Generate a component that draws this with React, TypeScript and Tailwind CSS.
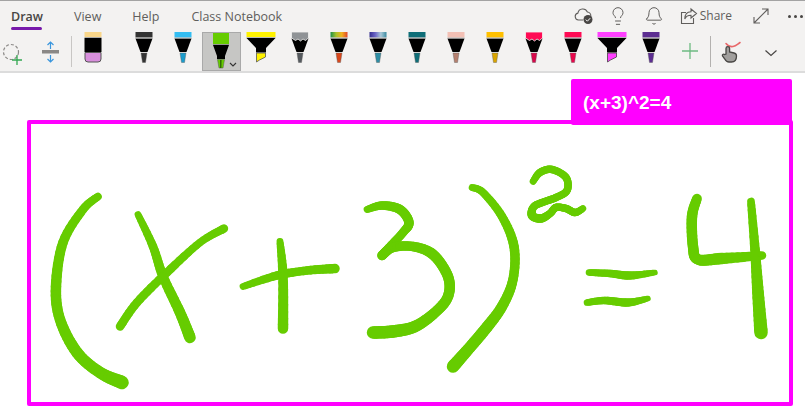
import { Bell, Lightbulb } from "lucide-react";

type Pt = [number, number, number];

const INK = "#66cc00";

const strokes: Pt[][] = [
    // (
    [[98, 197, 6], [83, 210, 7], [63, 243, 8], [56, 287, 9], [60, 320, 9], [77, 353, 10], [100, 373, 10], [122, 383, 12]],
    // x
    [[138, 215, 5], [153, 247, 7], [163, 277, 8], [180, 313, 9], [190, 338, 10]],
    [[224, 229, 7], [200, 243, 6], [167, 273, 7], [137, 303, 7], [120, 327, 7]],
    // +
    [[243, 287, 5], [277, 276, 7], [307, 271, 7], [335, 269, 8]],
    [[280, 242, 5], [283, 277, 8], [283, 329, 9]],
    // 3
    [[367, 210, 5], [382, 206, 7], [400, 210, 8], [409, 223, 8], [403, 233, 7], [392, 245, 7], [382, 256, 8]],
    [[382, 256, 8], [393, 248, 8], [413, 247, 8], [433, 255, 9], [448, 277, 9], [448, 297, 9], [435, 313, 9], [415, 327, 10], [393, 332, 11], [373, 333, 11]],
    // )
    [[472, 188, 5], [483, 193, 6], [502, 217, 7], [514, 247, 8], [513, 280, 8], [502, 307, 9], [485, 330, 10], [468, 350, 10], [453, 367, 11]],
    // 2
    [[533, 182, 5], [540, 173, 6], [552, 170, 6], [566, 178, 6], [567, 191, 6], [556, 198, 6], [545, 202, 6], [534, 207, 6], [532, 216, 7], [541, 219, 7], [550, 214, 6], [556, 208, 6], [566, 209, 6], [575, 213, 6], [583, 209, 5]],
    // =
    [[589, 273, 5], [610, 274, 6], [630, 276, 7], [655, 273, 4]],
    [[587, 303, 5], [605, 301, 6], [628, 303, 7], [648, 299, 4]],
    // 4
    [[697, 199, 8], [692, 217, 9], [693, 247, 9], [698, 260, 9], [722, 259, 10], [762, 256, 7]],
    [[751, 202, 6], [755, 250, 8], [758, 293, 10], [761, 333, 12]],
];

// catmull-rom sampling, the ink changes width along the stroke
function sample(points: Pt[]) {
    const out: Pt[] = [];
    for (let i = 0; i < points.length - 1; i++) {
        const p0 = points[Math.max(i - 1, 0)];
        const p1 = points[i];
        const p2 = points[i + 1];
        const p3 = points[Math.min(i + 2, points.length - 1)];
        for (let s = 0; s < 8; s++) {
            const t = s / 8;
            const f = (a: number, b: number, c: number, d: number) =>
                0.5 * (2 * b + (c - a) * t + (2 * a - 5 * b + 4 * c - d) * t * t + (3 * b - a - 3 * c + d) * t * t * t);
            out.push([f(p0[0], p1[0], p2[0], p3[0]), f(p0[1], p1[1], p2[1], p3[1]), p1[2] + (p2[2] - p1[2]) * t]);
        }
    }
    out.push(points[points.length - 1]);
    return out;
}

function Ink() {
    return (
        <svg viewBox="31 125 758 277" className="block w-full h-full">
            <g stroke={INK} strokeLinecap="round" fill="none">
                {strokes.map((points, i) =>
                    sample(points).map((p, j, all) =>
                        j === 0 ? null : (
                            <line key={`${i}-${j}`} x1={all[j - 1][0]} y1={all[j - 1][1]} x2={p[0]} y2={p[1]} strokeWidth={p[2] + 1.5} />
                        )
                    )
                )}
            </g>
        </svg>
    );
}

function Pen({ cap, tip, torn, id, stops }: { cap: string; tip: string; torn?: boolean; id?: string; stops?: string[] }) {
    const capFill = stops ? `url(#${id})` : cap;
    return (
        <svg width="30" height="31" viewBox="0 0 30 31">
            {stops && (
                <defs>
                    <linearGradient id={id}>
                        {stops.map((c, i) => (
                            <stop key={i} offset={i / (stops.length - 1)} stopColor={c} />
                        ))}
                    </linearGradient>
                </defs>
            )}
            <path d="M6.500 6.500h17l-5 13.500h-7z" fill="#000" />
            {torn ? (
                <path d="M6.500 0h17v6l-3 2.500-2.500-1.500-2.500 2-2.500-2-2.500 1.500-4-2.500z" fill={capFill} stroke="#f3f2f1" strokeWidth="0.8" />
            ) : (
                <>
                    <rect x="6.5" y="0" width="17" height="5.5" fill={capFill} />
                    <path d="M6.500 6h17" stroke="#a9a9a9" strokeWidth="0.8" />
                </>
            )}
            <path d="M12 21h6l-1.500 9.500h-3z" fill={tip} stroke="#555" strokeWidth="0.4" />
        </svg>
    );
}

function Highlighter({ cap, tip, tipDark }: { cap: string; tip: string; tipDark: string }) {
    return (
        <svg width="30" height="31" viewBox="0 0 30 31">
            <rect x="0.5" y="0" width="29" height="5" fill={cap} />
            <path d="M0.500 6h29l-9.500 10v4.500h-10V16z" fill="#000" />
            <path d="M0.500 5.500h29" stroke="#a9a9a9" strokeWidth="0.8" />
            <path d="M10.500 21h9v4l-6 3-3 2z" fill={tip} stroke={tipDark} strokeWidth="0.8" />
        </svg>
    );
}

function Eraser() {
    return (
        <svg width="30" height="31" viewBox="0 0 30 31">
            <rect x="6.5" y="0" width="17" height="5" fill="#f9d68a" />
            <path d="M6.500 5.500h17" stroke="#999" strokeWidth="0.8" />
            <rect x="6.5" y="6" width="17" height="14" fill="#000" />
            <path d="M7 20.500h16V27a3 3 0 0 1-3 3H10a3 3 0 0 1-3-3z" fill="#d88fdc" stroke="#555" strokeWidth="1" />
        </svg>
    );
}

function SelectedPen() {
    return (
        <div className="w-[39px] h-[39px] bg-[#c6c6c4] border border-[#a9a9a9] flex justify-center items-start">
            <svg width="37" height="37" viewBox="0 0 37 37">
                <rect x="10" y="0" width="16" height="11" fill="#66cc00" />
                <path d="M10 11.500h16" stroke="#8a8a8a" strokeWidth="0.8" />
                <path d="M10 12h16l-4 11v3h-8v-3z" fill="#000" />
                <path d="M14.500 26.500h7l-1.500 8.500h-4z" fill="#66cc00" stroke="#555" strokeWidth="0.5" />
                <path d="M17 27h1.600l-.2 8h-1.400z" fill="#2f6b00" />
                <path d="M27 30l3 3 3-3" fill="none" stroke="#333" strokeWidth="1.1" />
            </svg>
        </div>
    );
}

function Cell({ children }: { children: React.ReactNode }) {
    return <div className="w-[39px] h-[39px] shrink-0 flex justify-center items-start">{children}</div>;
}

function Lasso() {
    return (
        <svg width="22" height="24" viewBox="0 0 22 24">
            <circle cx="9" cy="10" r="7.5" fill="none" stroke="#8a8886" strokeWidth="1.2" strokeDasharray="3 2" />
            <path d="M15 13v10M10 18h10" stroke="#33a852" strokeWidth="1.3" />
        </svg>
    );
}

function InsertSpace() {
    return (
        <svg width="20" height="22" viewBox="0 0 20 22">
            <rect x="1" y="9" width="17" height="3.5" fill="#8a8886" />
            <path d="M9.500 8V1M6.500 4l3-3 3 3M9.500 14v7M6.500 18l3 3 3-3" fill="none" stroke="#3a96dd" strokeWidth="1.2" />
        </svg>
    );
}

function CloudCheck() {
    return (
        <svg width="20" height="18" viewBox="0 0 20 18" fill="none">
            <path d="M9 13H4.500a3.500 3.500 0 0 1-.6-6.900A5 5 0 0 1 13.400 5a3.600 3.600 0 0 1 3.400 4" stroke="#605e5c" strokeWidth="1.1" />
            <circle cx="14" cy="12.5" r="4.5" fill="#484644" />
            <path d="M11.800 12.600l1.600 1.600 2.800-3" stroke="#fff" strokeWidth="1" />
        </svg>
    );
}

function ShareIcon() {
    return (
        <svg width="18" height="18" viewBox="0 0 18 18" fill="none" stroke="#605e5c" strokeWidth="1.1">
            <path d="M6 5.500H1.500v11h12V11" />
            <path d="M11 2l5.500 4.500L11 11V8.200C8 8.200 5.800 9.500 4.800 12c0-4.500 2.500-7 6.200-7.200z" />
        </svg>
    );
}

function ExpandIcon() {
    return (
        <svg width="16" height="16" viewBox="0 0 16 16" fill="none" stroke="#605e5c" strokeWidth="1.1">
            <path d="M1 15L15 1M9 1h6v6M1 9v6h6" />
        </svg>
    );
}

function TouchIcon() {
    return (
        <svg width="22" height="22" viewBox="0 0 22 22" fill="none">
            <path d="M6 2.500c2 2.500 4.500 3.500 7 3 3-.6 4-2 7-4" stroke="#e8686a" strokeWidth="1.6" strokeLinecap="round" />
            <path d="M6 13V7.500a1.800 1.800 0 0 1 3.600 0V11l4.400 1c1.800.4 2.500 1.500 2.500 3 0 3.500-1.800 6-5 6H9c-2 0-3.200-1-4.200-3L2.500 15c-.6-1.200.8-2.500 2-1.500z" fill="#a19f9d" stroke="#484644" strokeWidth="1.3" />
        </svg>
    );
}

const pens = [
    <Pen key="black" cap="#333333" tip="#333333" />,
    <Pen key="blue" cap="#33bdf2" tip="#1b9ccc" />,
    <SelectedPen key="green" />,
    <Highlighter key="yellow" cap="#fff200" tip="#fff200" tipDark="#555" />,
    <Pen key="silver" cap="#8f9396" tip="#555a5e" torn />,
    <Pen key="rainbow" cap="" tip="#d9471b" id="rainbow" stops={["#1c8f4a", "#a6c22c", "#f2b01e", "#e0452a"]} />,
    <Pen key="galaxy" cap="" tip="#2e8ea5" id="galaxy" stops={["#35308f", "#6a63c7", "#a9c9d8", "#3a8aa0"]} />,
    <Pen key="teal" cap="#0f6e78" tip="#0f6e78" />,
    <Pen key="rose" cap="#f2c0b5" tip="#b5806f" />,
    <Pen key="gold" cap="#ffc000" tip="#d9a400" />,
    <Pen key="redtorn" cap="#ff0a54" tip="#d6084a" torn />,
    <Pen key="red" cap="#ff0a54" tip="#e8084c" />,
    <Highlighter key="magenta" cap="#ff40ff" tip="#ff40ff" tipDark="#444" />,
    <Pen key="purple" cap="#5c2d91" tip="#5c2d91" />,
];

export default function App() {
    return (
        <div className="w-[805px] h-[420px] bg-white flex flex-col overflow-hidden font-['Open_Sans',sans-serif]">
            <div className="h-[73px] shrink-0 bg-[#f3f2f1] border-t border-[#a3a3a3] border-b-2 border-b-[#dcdcdc] flex flex-col">
                <div className="h-[31px] shrink-0 flex items-start text-[12.5px] text-[#605e5c]">
                    <div className="ml-[11px] w-[31px] h-[29px] flex flex-col justify-between">
                        <span className="font-semibold text-[#484644] mt-[7px] leading-[18px]">Draw</span>
                        <div className="h-[3px] bg-[#7719aa] rounded-sm"></div>
                    </div>
                    <span className="ml-[32px] mt-[7px] leading-[18px]">View</span>
                    <span className="ml-[31px] mt-[7px] leading-[18px]">Help</span>
                    <span className="ml-[32px] mt-[7px] leading-[18px]">Class Notebook</span>
                    <div className="ml-auto flex items-center h-[30px]">
                        <CloudCheck />
                        <Lightbulb className="w-[20px] h-[20px] ml-[14px] text-[#605e5c]" strokeWidth={1.2} />
                        <Bell className="w-[20px] h-[20px] ml-[16px] text-[#605e5c]" strokeWidth={1.2} />
                        <div className="ml-[16px]"><ShareIcon /></div>
                        <span className="ml-[2px] text-[12px] leading-none">Share</span>
                        <div className="ml-[21px]"><ExpandIcon /></div>
                        <span className="ml-[19px] mr-[2px] flex gap-[3px]">
                            <i className="w-[3px] h-[3px] bg-[#484644] rounded-full"></i>
                            <i className="w-[3px] h-[3px] bg-[#484644] rounded-full"></i>
                            <i className="w-[3px] h-[3px] bg-[#484644] rounded-full"></i>
                        </span>
                    </div>
                </div>
                <div className="h-[39px] flex items-start">
                    <div className="w-[31px] shrink-0 pl-[2px] pt-[10px]"><Lasso /></div>
                    <div className="w-[38px] shrink-0 pl-[10px] pt-[9px]"><InsertSpace /></div>
                    <div className="w-px h-[31px] mt-[4px] ml-[2px] bg-[#c8c6c4] shrink-0"></div>
                    <div className="ml-[1px] mr-[12px]"><Cell><Eraser /></Cell></div>
                    {pens.map((pen) => (
                        <Cell key={pen.key}>{pen}</Cell>
                    ))}
                    <Cell>
                        <svg width="18" height="18" viewBox="0 0 18 18" className="mt-[10px]">
                            <path d="M9 1v16M1 9h16" stroke="#6dbb82" strokeWidth="1.3" />
                        </svg>
                    </Cell>
                    <div className="w-px h-[31px] mt-[4px] ml-[1px] bg-[#b3b1af] shrink-0"></div>
                    <div className="ml-[9px] mt-[9px]"><TouchIcon /></div>
                    <svg width="14" height="8" viewBox="0 0 14 8" className="ml-[22px] mt-[17px]">
                        <path d="M1.500 1.500L7 6.500l5.500-5" fill="none" stroke="#484644" strokeWidth="1.2" />
                    </svg>
                </div>
            </div>
            <div className="flex-1 pt-[47px] pl-[27px]">
                <div className="relative w-[766px] h-[286px] border-4 border-[#ff00ff] rounded-[2px]">
                    <div className="absolute right-[-3px] top-[-45px] w-[221px] h-[46px] bg-[#ff00ff] rounded-[2px] flex items-center pl-[12px] pt-[2px] text-white font-bold text-[19px] font-['Liberation_Sans',sans-serif]">
                        (x+3)^2=4
                    </div>
                    <Ink />
                </div>
            </div>
        </div>
    );
}
